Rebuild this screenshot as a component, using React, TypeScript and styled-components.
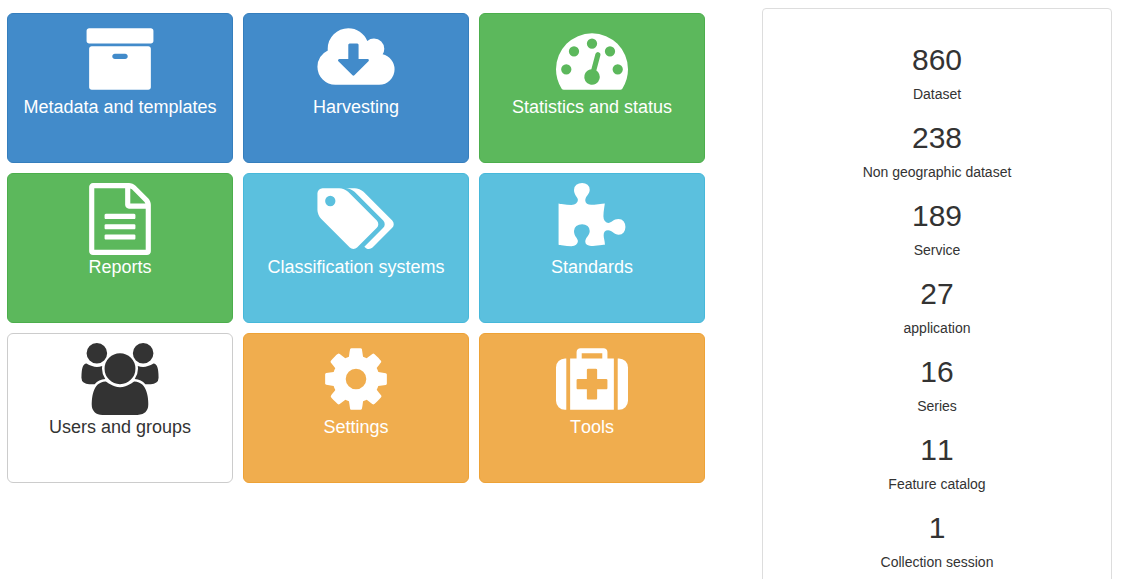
import React from "react";
import styled, { createGlobalStyle, css } from "styled-components";

const GlobalStyle = createGlobalStyle`
  *, *::before, *::after { box-sizing: border-box; }
  body {
    margin: 0;
    background: #fff;
    color: #333;
    font-family: "Liberation Sans", Arial, Helvetica, sans-serif;
    font-size: 14px;
    font-kerning: none;
    line-height: 20px;
  }
`;

type Tone = "primary" | "success" | "info" | "warning" | "plain";

const tones: Record<Tone, { fill: string; edge: string; text: string }> = {
  primary: { fill: "#428bca", edge: "#357ebd", text: "#fff" },
  success: { fill: "#5cb85c", edge: "#4cae4c", text: "#fff" },
  info: { fill: "#5bc0de", edge: "#46b8da", text: "#fff" },
  warning: { fill: "#f0ad4e", edge: "#eea236", text: "#fff" },
  plain: { fill: "#fff", edge: "#ccc", text: "#333" },
};

const Page = styled.main`
  display: grid;
  grid-template-columns: minmax(0, 1fr) 350px;
  align-items: start;
  column-gap: 57px;
  height: 100vh;
  padding: 8px 11px 0 7px;
  overflow: hidden;
`;

const TileGrid = styled.nav`
  display: grid;
  grid-template-columns: repeat(3, minmax(0, 1fr));
  gap: 10px;
  padding-top: 5px;
`;

const Tile = styled.a<{ $tone: Tone }>`
  display: flex;
  flex-direction: column;
  align-items: center;
  height: 150px;
  padding: 9px;
  border: 1px solid;
  border-radius: 6px;
  font-size: 18px;
  line-height: 24px;
  text-align: center;
  text-decoration: none;
  white-space: nowrap;
  ${({ $tone }) => css`
    background: ${tones[$tone].fill};
    border-color: ${tones[$tone].edge};
    color: ${tones[$tone].text};
  `}
`;

const Glyph = styled.svg`
  flex: none;
  width: 80px;
  height: 72px;
  fill: currentColor;
`;

const Panel = styled.aside`
  padding: 35px 15px;
  border: 1px solid #ddd;
  border-radius: 4px;
`;

const StatList = styled.dl`
  display: flex;
  flex-direction: column;
  gap: 18px;
  margin: 0;
`;

const Stat = styled.div`
  display: flex;
  flex-direction: column-reverse;
  gap: 8px;
  text-align: center;
`;

const StatLabel = styled.dt`
  font-size: 14px;
  line-height: 20px;
`;

const StatValue = styled.dd`
  margin: 0;
  font-size: 30px;
  line-height: 32px;
`;

interface TileData {
  label: string;
  tone: Tone;
  width: number;
  path: string;
}

const tiles: TileData[] = [
  {
    label: "Metadata and templates",
    tone: "primary",
    width: 1792,
    path: "M1088 832q0-26-19-45t-45-19h-256q-26 0-45 19t-19 45 19 45 45 19h256q26 0 45-19t19-45zm576-192v960q0 26-19 45t-45 19h-1408q-26 0-45-19t-19-45v-960q0-26 19-45t45-19h1408q26 0 45 19t19 45zm64-448v256q0 26-19 45t-45 19h-1536q-26 0-45-19t-19-45v-256q0-26 19-45t45-19h1536q26 0 45 19t19 45z",
  },
  {
    label: "Harvesting",
    tone: "primary",
    width: 1920,
    path: "M1280 928q0-14-9-23t-23-9h-224v-352q0-13-9.5-22.5t-22.5-9.5h-192q-13 0-22.5 9.5t-9.5 22.5v352h-224q-13 0-22.5 9.5t-9.5 22.5q0 14 9 23l352 352q9 9 23 9t23-9l351-351q10-12 10-24zm640 224q0 159-112.5 271.5t-271.5 112.5h-1088q-185 0-316.5-131.5t-131.5-316.5q0-130 70-240t188-165q-2-30-2-43 0-212 150-362t362-150q156 0 285.5 87t188.5 231q71-62 166-62 106 0 181 75t75 181q0 76-41 138 130 31 213.5 135.5t83.5 238.5z",
  },
  {
    label: "Statistics and status",
    tone: "success",
    width: 1792,
    path: "M384 1152q0-53-37.5-90.5t-90.5-37.5-90.5 37.5-37.5 90.5 37.5 90.5 90.5 37.5 90.5-37.5 37.5-90.5zm192-448q0-53-37.5-90.5t-90.5-37.5-90.5 37.5-37.5 90.5 37.5 90.5 90.5 37.5 90.5-37.5 37.5-90.5zm428 481l101-382q6-26-7.5-48.5t-38.5-29.5-48 6.5-30 39.5l-101 382q-60 5-107 43.5t-63 98.5q-20 77 20 146t117 89 146-20 89-117q16-60-6-117t-72-91zm660-33q0-53-37.5-90.5t-90.5-37.5-90.5 37.5-37.5 90.5 37.5 90.5 90.5 37.5 90.5-37.5 37.5-90.5zm-640-640q0-53-37.5-90.5t-90.5-37.5-90.5 37.5-37.5 90.5 37.5 90.5 90.5 37.5 90.5-37.5 37.5-90.5zm448 192q0-53-37.5-90.5t-90.5-37.5-90.5 37.5-37.5 90.5 37.5 90.5 90.5 37.5 90.5-37.5 37.5-90.5zm320 448q0 261-141 483-19 29-54 29h-1402q-35 0-54-29-141-221-141-483 0-182 71-348t191-286 286-191 348-71 348 71 286 191 191 286 71 348z",
  },
  {
    label: "Reports",
    tone: "success",
    width: 1536,
    path: "M1468 380q28 28 48 76t20 88v1152q0 40-28 68t-68 28h-1344q-40 0-68-28t-28-68v-1600q0-40 28-68t68-28h896q40 0 88 20t76 48zm-444-244v376h376q-10-29-22-41l-313-313q-12-12-41-22zm384 1528v-1024h-416q-40 0-68-28t-28-68v-416h-768v1536h1280zm-1024-864q0-14 9-23t23-9h704q14 0 23 9t9 23v64q0 14-9 23t-23 9h-704q-14 0-23-9t-9-23v-64zm736 224q14 0 23 9t9 23v64q0 14-9 23t-23 9h-704q-14 0-23-9t-9-23v-64q0-14 9-23t23-9h704zm0 256q14 0 23 9t9 23v64q0 14-9 23t-23 9h-704q-14 0-23-9t-9-23v-64q0-14 9-23t23-9h704z",
  },
  {
    label: "Classification systems",
    tone: "info",
    width: 1920,
    path: "M448 448q0-53-37.5-90.5t-90.5-37.5-90.5 37.5-37.5 90.5 37.5 90.5 90.5 37.5 90.5-37.5 37.5-90.5zm1067 576q0 53-37 90l-491 492q-39 37-91 37-53 0-90-37l-715-716q-38-37-64.5-101t-26.5-117v-416q0-52 38-90t90-38h416q53 0 117 26.5t102 64.5l715 714q37 39 37 91zm384 0q0 53-37 90l-491 492q-39 37-91 37-36 0-59-14t-53-45l470-470q37-37 37-90 0-52-37-91l-715-714q-38-38-102-64.5t-117-26.5h224q53 0 117 26.5t102 64.5l715 714q37 39 37 91z",
  },
  {
    label: "Standards",
    tone: "info",
    width: 1664,
    path: "M1664 1098q0 81-44.5 135t-123.5 54q-41 0-77.5-17.5t-59-38-56.5-38-71-17.5q-110 0-110 124 0 39 16 115t15 115v5q-22 0-33 1-34 3-97.5 11.5t-115.5 13.5-98 5q-61 0-103-26.5t-42-83.5q0-37 17.5-71t38-56.5 38-59 17.5-77.5q0-79-54-123.5t-135-44.5q-84 0-143 45.5t-59 127.5q0 43 15 83t33.5 64.5 33.5 53 15 50.5q0 45-46 89-37 35-117 35-95 0-245-24-9-2-27.5-4t-27.5-4l-13-2q-1 0-3-1-2 0-2-1v-1024q2 1 17.5 3.5t34 5 21.5 3.5q150 24 245 24 80 0 117-35 46-44 46-89 0-22-15-50.5t-33.5-53-33.5-64.5-15-83q0-82 59-127.5t144-45.5q80 0 134 44.5t54 123.5q0 41-17.5 77.5t-38 59-38 56.5-17.5 71q0 57 42 83.5t103 26.5q64 0 180-15t163-17v2q-1 2-3.5 17.5t-5 34-3.5 21.5q-24 150-24 245 0 80 35 117 44 46 89 46 22 0 50.5-15t53-33.5 64.5-33.5 83-15q82 0 127.5 59t45.5 143z",
  },
  {
    label: "Users and groups",
    tone: "plain",
    width: 1920,
    path: "M593 896q-162 5-265 128h-134q-82 0-138-40.5t-56-118.5q0-353 124-353 6 0 43.5 21t97.5 42.5 119 21.5q67 0 133-23-5 37-5 66 0 139 81 256zm1071 637q0 120-73 189.5t-194 69.5h-874q-121 0-194-69.5t-73-189.5q0-53 3.5-103.5t14-109 26.5-108.5 43-97.5 62-81 85.5-53.5 111.5-20q10 0 43 21.5t73 48 107 48 135 21.5 135-21.5 107-48 73-48 43-21.5q61 0 111.5 20t85.5 53.5 62 81 43 97.5 26.5 108.5 14 109 3.5 103.5zm-1024-1277q0 106-75 181t-181 75-181-75-75-181 75-181 181-75 181 75 75 181zm704 384q0 159-112.5 271.5t-271.5 112.5-271.5-112.5-112.5-271.5 112.5-271.5 271.5-112.5 271.5 112.5 112.5 271.5zm576 225q0 78-56 118.5t-138 40.5h-134q-103-123-265-128 81-117 81-256 0-29-5-66 66 23 133 23 59 0 119-21.5t97.5-42.5 43.5-21q124 0 124 353zm-128-609q0 106-75 181t-181 75-181-75-75-181 75-181 181-75 181 75 75 181z",
  },
  {
    label: "Settings",
    tone: "warning",
    width: 1536,
    path: "M1024 896q0-106-75-181t-181-75-181 75-75 181 75 181 181 75 181-75 75-181zm512-109v222q0 12-8 23t-20 13l-185 28q-19 54-39 91 35 50 107 138 10 12 10 25t-9 23q-27 37-99 108t-94 71q-12 0-26-9l-138-108q-44 23-91 38-16 136-29 186-7 28-36 28h-222q-14 0-24.5-8.5t-11.5-21.5l-28-184q-49-16-90-37l-141 107q-10 9-25 9-14 0-25-11-126-114-165-168-7-10-7-23 0-12 8-23 15-21 51-66.5t54-70.5q-27-50-41-99l-183-27q-13-2-21-12.5t-8-23.5v-222q0-12 8-23t19-13l186-28q14-46 39-92-40-57-107-138-10-12-10-24 0-10 9-23 26-36 98.5-107.5t94.5-71.5q13 0 26 10l138 107q44-23 91-38 16-136 29-186 7-28 36-28h222q14 0 24.5 8.5t11.5 21.5l28 184q49 16 90 37l142-107q9-9 24-9 13 0 25 10 129 119 165 170 7 8 7 22 0 12-8 23-15 21-51 66.5t-54 70.5q26 50 41 98l183 28q13 2 21 12.5t8 23.5z",
  },
  {
    label: "Tools",
    tone: "warning",
    width: 1792,
    path: "M1280 1120v-192q0-14-9-23t-23-9h-224v-224q0-14-9-23t-23-9h-192q-14 0-23 9t-9 23v224h-224q-14 0-23 9t-9 23v192q0 14 9 23t23 9h224v224q0 14 9 23t23 9h192q14 0 23-9t9-23v-224h224q14 0 23-9t9-23zm-640-736h512v-128h-512v128zm-384 0v1280h-32q-92 0-158-66t-66-158v-832q0-92 66-158t158-66h32zm1184 0v1280h-1088v-1280h160v-160q0-40 28-68t68-28h576q40 0 68 28t28 68v160h160zm352 224v832q0 92-66 158t-158 66h-32v-1280h32q92 0 158 66t66 158z",
  },
];

const stats = [
  { value: 860, label: "Dataset" },
  { value: 238, label: "Non geographic dataset" },
  { value: 189, label: "Service" },
  { value: 27, label: "application" },
  { value: 16, label: "Series" },
  { value: 11, label: "Feature catalog" },
  { value: 1, label: "Collection session" },
];

export default function App() {
  return (
    <>
      <GlobalStyle />
      <Page>
        <TileGrid>
          {tiles.map((tile) => (
            <Tile key={tile.label} href="#" $tone={tile.tone}>
              <Glyph viewBox={`0 0 ${tile.width} 1792`} aria-hidden="true">
                <path d={tile.path} />
              </Glyph>
              {tile.label}
            </Tile>
          ))}
        </TileGrid>
        <Panel>
          <StatList>
            {stats.map((stat) => (
              <Stat key={stat.label}>
                <StatLabel>{stat.label}</StatLabel>
                <StatValue>{stat.value}</StatValue>
              </Stat>
            ))}
          </StatList>
        </Panel>
      </Page>
    </>
  );
}
